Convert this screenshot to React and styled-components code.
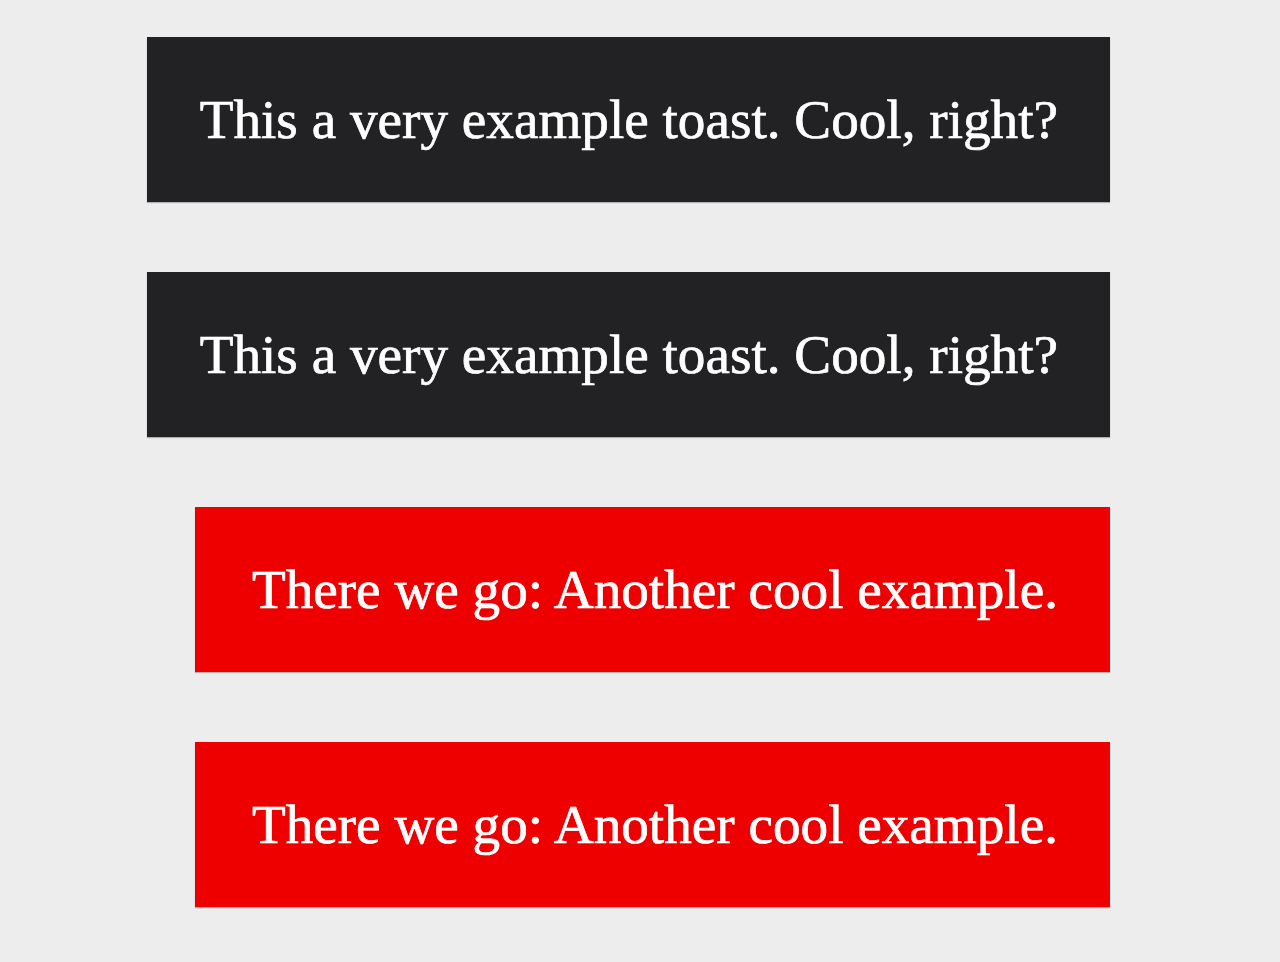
import React from 'react';
import styled, { createGlobalStyle } from 'styled-components';

const GlobalStyle = createGlobalStyle`
    html, body {
        margin: 0;
        padding: 0;
        background: #ededed;
    }
`;

const Stack = styled.div`
    display: flex;
    flex-direction: column;
    align-items: flex-end;
    gap: 70px;
    padding: 37px 170px 0 0;
    min-height: 962px;
    box-sizing: border-box;
`;

const Toast = styled.div`
    background-color: ${props => props.variant === 'error' ? '#ee0000' : '#222224'};
    color: #fff;
    font-family: "Liberation Serif", "Times New Roman", serif;
    font-size: 55.2px;
    line-height: 63px;
    padding: 51px 52px 51px ${props => props.variant === 'error' ? '57px' : '53px'};
    -webkit-text-stroke: 0.7px #fff;
    box-shadow: 0 1px 1px rgba(0, 0, 0, 0.25);
    white-space: nowrap;
`;

const toasts = [
    { text: 'This a very example toast. Cool, right?' },
    { text: 'This a very example toast. Cool, right?' },
    { text: 'There we go: Another cool example.', variant: 'error' },
    { text: 'There we go: Another cool example.', variant: 'error' },
];

const App = () => {
    return (
        <>
            <GlobalStyle />
            <Stack>
                {toasts.map((t, i) => (
                    <Toast key={i} variant={t.variant}>
                        {t.text}
                    </Toast>
                ))}
            </Stack>
        </>
    );
};

export default App;
